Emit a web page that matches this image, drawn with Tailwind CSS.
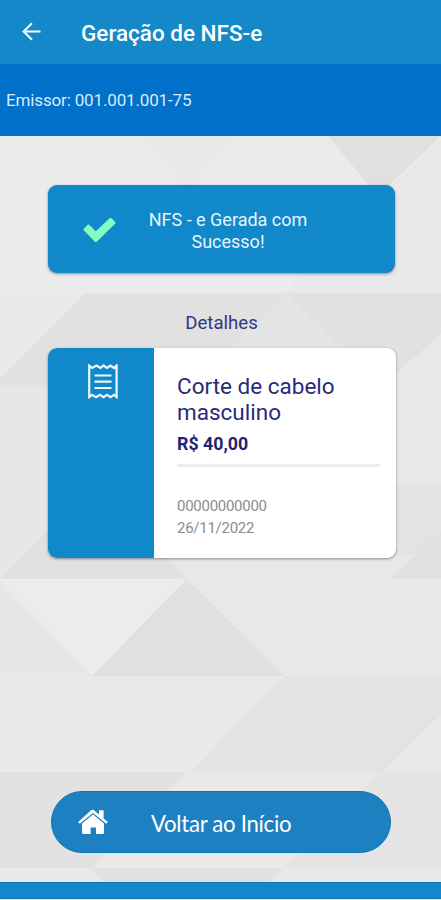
<!DOCTYPE html>
<html lang="pt-BR">
<head>
<meta charset="utf-8">
<title>Geração de NFS-e</title>
<script src="https://cdn.jsdelivr.net/npm/@tailwindcss/browser@4"></script>
</head>
<body class="w-[441px] h-[900px] overflow-hidden font-['Roboto',sans-serif]">
<div class="relative isolate flex flex-col w-[441px] h-[900px] bg-[#e9e9e9]">
  <svg class="absolute inset-0 -z-10" width="441" height="900" viewBox="0 0 441 900">
    <path fill="#ebebeb" d="M0 136H441V293H0z"/>
    <path fill="#e9e9e9" d="M138 136h100l-50 55z"/>
    <path fill="#e0e0e0" d="M328 136H441L378 196z"/>
    <path fill="#e8e8e8" d="M441 140V293H285L380 196z"/>
    <path fill="#e1e1e1" d="M86 293H441V387H-8z"/>
    <path fill="#e4e4e4" d="M285 293L380 387H190z"/>
    <path fill="#e8e8e8" d="M441 333V483H395V375z"/>
    <path fill="#e7e7e7" d="M0 387H60V579H0z"/>
    <path fill="#e3e3e3" d="M390 483H441V530L390 579z"/>
    <path fill="#e1e1e1" d="M0 579L95 483L187 579z"/>
    <path fill="#e8e8e8" d="M165 555H415L390 579H441V676H285L187 579z"/>
    <path fill="#e0e0e0" d="M390 579L441 530V579z"/>
    <path fill="#ececec" d="M0 579H187L92 676z"/>
    <path fill="#e7e7e7" d="M0 585L92 676H0z"/>
    <path fill="#e0e0e0" d="M187 579L285 676H92z"/>
    <path fill="#e9e9e9" d="M0 676H285L190 772H0z"/>
    <path fill="#e3e3e3" d="M285 676H441V715L382 772H190z"/>
    <path fill="#e2e2e2" d="M0 772H187L92 868H0z"/>
    <path fill="#e8e8e8" d="M187 772H382L285 868z"/>
    <path fill="#e4e4e4" d="M382 772H441V868H285z"/>
    <path fill="#e2e2e2" d="M90 868H285L270 882H104z"/>
  </svg>

  <header class="flex items-center h-16 shrink-0 bg-[#1488c9] text-white pl-[22px]">
    <svg class="shrink-0" width="20" height="20" viewBox="0 0 20 20" fill="none" stroke="currentColor" stroke-width="2"><path d="M18.5 9.5H1.8M10 1.2L1.6 9.5L10 17.8"/></svg>
    <h1 class="ml-[39px] mt-px text-[22.5px] leading-7 font-medium whitespace-nowrap">Geração de NFS-e</h1>
  </header>
  <div class="flex items-center h-[72px] shrink-0 bg-[#0070cb] text-[#dcebf8] pl-1.5 pt-0.5 text-[17px] tracking-[-0.15px] whitespace-nowrap">Emissor: 001.001.001-75</div>

  <main class="flex flex-col flex-1 items-start pl-12">
    <section class="mt-[49px] flex w-[347px] h-[88px] rounded-[9px] bg-[#1188ca] shadow-[0_1px_3px_rgba(0,0,0,0.4)]">
      <svg class="ml-[35px] mt-8 shrink-0" width="33" height="27" viewBox="0 0 33 27" fill="#86fdbd" stroke="#86fdbd" stroke-width="2" stroke-linejoin="round"><path d="M1.5 12.5L5.5 8.5L12.8 15.8L27.5 1.8L31.6 5.8L12.8 24.2z"/></svg>
      <p class="ml-[24px] mt-[24px] w-[176px] text-center text-[18px] leading-[22px] text-[#e6f4fd] whitespace-nowrap">NFS - e Gerada com<br>Sucesso!</p>
    </section>

    <h2 class="mt-[38px] w-[347px] text-center text-[18.6px] leading-6 text-[#303685]">Detalhes</h2>

    <section class="mt-[13px] flex w-[348px] h-[210px] rounded-[9px] overflow-hidden bg-white shadow-[0_1px_3px_rgba(0,0,0,0.4)]">
      <div class="w-[106px] shrink-0 bg-[#1188ca] pl-10 pt-4">
        <svg width="30" height="35" viewBox="0 0 30 35" fill="none" stroke="#eef8ff" stroke-width="2.2"><path d="M1.2 1.5L4 4L8.5 1.5L12.5 4L15.5 1.5L19 4L22.5 1.5L26 4L28.6 1.5V33L26 30.8L22.5 33.2L19 30.8L15.5 33.2L12 30.8L8 33.2L4 30.8L1.2 33z"/><path d="M6.5 11.5H23.5M6.5 17.7H23.5M6.5 24H23.5"/></svg>
      </div>
      <div class="pl-[23px] pt-[25px]">
        <h3 class="text-[22.5px] leading-[26px] text-[#262c7a] whitespace-nowrap">Corte de cabelo<br>masculino</h3>
        <p class="mt-[7px] text-[17.8px] leading-6 font-bold text-[#1d2473]">R$ 40,00</p>
        <div class="mt-[8px] h-[3px] w-[203px] bg-[#ededed]"></div>
        <p class="mt-[28px] text-[15px] leading-[22px] tracking-[-0.27px] text-[#8b8b8b]">00000000000<br>26/11/2022</p>
      </div>
    </section>

    <button class="mt-[233px] ml-[3px] flex w-[340px] h-[62px] items-center rounded-full bg-[#1d80c0] border border-[#0b76ba] text-white">
      <svg class="ml-[26px] shrink-0" width="30" height="26" viewBox="0 0 30 26" fill="currentColor"><path d="M15 .6L21 5.4V1.2H25.6V9.4L29.8 13L28.3 14.8L15 4L1.7 14.8L.2 13L12.8 1.6Q15-.2 17.2 1.6z"/><path d="M15 5.4L26 14.5V23.5Q26 25 24.5 25H18V18.5H12.6V25H5.5Q4 25 4 23.5V14.5z"/></svg>
      <span class="ml-[43px] mt-[3px] font-['Lato',sans-serif] text-[22.2px] tracking-[-0.3px] leading-7 whitespace-nowrap">Voltar ao Início</span>
    </button>
  </main>
  <footer class="h-[17px] mb-px shrink-0 bg-[#1188ca] border-y border-[#0b76b5]"></footer>
</div>
</body>
</html>
